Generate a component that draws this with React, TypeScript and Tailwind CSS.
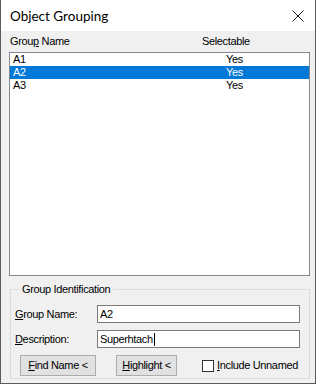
import { Fragment } from 'react';

const rows = [
  { name: 'A1', selectable: 'Yes' },
  { name: 'A2', selectable: 'Yes' },
  { name: 'A3', selectable: 'Yes' },
];

// letter with access-key underline
const Key = ({ children }: { children: string }) => <span className="underline underline-offset-[1px]">{children}</span>;

export default function App() {
  const selected = 'A2';
  return (
    <div
      className="w-[316px] h-[384px] bg-[#f0f0f0] border-x border-b border-[#5c5c5c] flex flex-col text-[11px] tracking-[-0.35px] text-black overflow-hidden"
      style={{ fontFamily: '"Liberation Sans", Arial, sans-serif' }}
    >
      {/* title bar */}
      <div className="h-[31px] bg-white flex items-center justify-between pl-[9px] pr-[10px] shrink-0">
        <span className="text-[13.5px] tracking-normal pt-[1px]" style={{ fontFamily: 'Lato, "Noto Sans", sans-serif' }}>
          Object Grouping
        </span>
        <svg width="12" height="12" viewBox="0 0 12 12" className="mr-[1px]">
          <path d="M0.5 0.5 L11.5 11.5 M11.5 0.5 L0.5 11.5" stroke="#111" strokeWidth="1" fill="none" />
        </svg>
      </div>

      {/* column header */}
      <div className="h-[21px] flex items-center pl-[9px] shrink-0">
        <span className="w-[192px]">
          Grou<Key>p</Key> Name
        </span>
        <span>Selectable</span>
      </div>

      {/* list */}
      <div className="ml-[8px] w-[301px] h-[224px] shrink-0 bg-white border border-[#828790]">
        {rows.map(r => (
          <Fragment key={r.name}>
            <div
              className={`h-[13px] flex items-center pl-[3px] leading-none ${
                r.name === selected ? 'bg-[#0078d7] text-white' : ''
              }`}
            >
              <span className="w-[213px]">{r.name}</span>
              <span>{r.selectable}</span>
            </div>
          </Fragment>
        ))}
      </div>

      {/* group identification */}
      <fieldset className="ml-[9px] mt-[7px] w-[300px] border border-[#dcdcdc] pl-[4px] pr-[9px] pb-[2px]">
        <legend className="ml-[4px] px-[3px] leading-[13px]">Group Identification</legend>

        <div className="flex items-center mt-[9px]">
          <label className="w-[82px]">
            <Key>G</Key>roup Name:
          </label>
          <div className="flex-1 h-[18px] bg-white border border-[#7a7a7a] flex items-center pl-[2px]">A2</div>
        </div>

        <div className="flex items-center mt-[7px]">
          <label className="w-[82px]">
            <Key>D</Key>escription:
          </label>
          <div className="flex-1 h-[18px] bg-white border border-[#7a7a7a] flex items-center pl-[2px]">
            Superhtach
            <span className="w-px h-[13px] bg-black ml-[1px]" />
          </div>
        </div>

        <div className="flex items-center mt-[7px] pl-[5px] whitespace-nowrap">
          <button className="w-[76px] h-[21px] bg-[#e1e1e1] border border-[#adadad]">
            <Key>F</Key>ind Name &lt;
          </button>
          <button className="w-[61px] h-[21px] bg-[#e1e1e1] border border-[#adadad] ml-[20px]">
            <Key>H</Key>ighlight &lt;
          </button>
          <span className="ml-[25px] w-[12px] h-[12px] shrink-0 bg-white border border-[#333]" />
          <span className="ml-[3px]">
            <Key>I</Key>nclude Unnamed
          </span>
        </div>
      </fieldset>
    </div>
  );
}
